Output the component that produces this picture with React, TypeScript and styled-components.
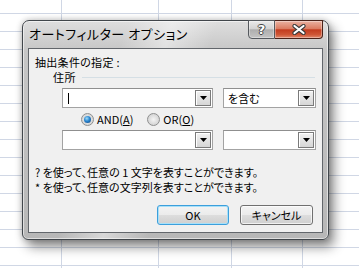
import React from "react";
import styled, { createGlobalStyle } from "styled-components";

const GRID = "#d0d7e5";
const FONT = `"Noto Sans CJK JP", "Noto Sans", sans-serif`;

const GlobalStyle = createGlobalStyle`
  html, body { margin: 0; padding: 0; background: #fff; }
  body { width: 359px; height: 268px; overflow: hidden; font-family: ${FONT}; }
`;

const Sheet = styled.div`
  width: 359px;
  height: 268px;
  box-sizing: border-box;
  padding: 20px 0 0 22px;
  background-color: #fff;
  background-image:
    linear-gradient(${GRID}, ${GRID}),
    linear-gradient(${GRID}, ${GRID}),
    linear-gradient(${GRID}, ${GRID}),
    linear-gradient(${GRID}, ${GRID}),
    linear-gradient(to bottom, ${GRID} 0 1px, transparent 1px);
  background-size: 1px 100%, 1px 100%, 1px 100%, 1px 100%, 100% 18px;
  background-position: 61px 0, 158px 0, 231px 0, 302px 0, 0 13px;
  background-repeat: no-repeat, no-repeat, no-repeat, no-repeat, repeat;
`;

const Window = styled.div`
  width: 307px;
  height: 220px;
  box-sizing: border-box;
  display: flex;
  flex-direction: column;
  padding: 0 5px 6px 5px;
  border: 1px solid #41464b;
  border-radius: 7px 7px 6px 6px;
  background:
    linear-gradient(108deg, rgba(255,255,255,0) 28%, rgba(255,255,255,.45) 40%, rgba(255,255,255,0) 52%),
    linear-gradient(to bottom, #dedede 0, #c6c6c6 30px, #b7b7b7 100%);
  box-shadow:
    inset 0 0 0 1px rgba(255,255,255,.55),
    5px 7px 12px rgba(0,0,0,.45),
    0 0 6px rgba(0,0,0,.25);
`;

const TitleBar = styled.div`
  height: 27px;
  display: flex;
  justify-content: space-between;
  align-items: flex-start;
  flex: none;
`;

const Title = styled.div`
  font-size: 13px;
  line-height: 16px;
  padding: 5px 0 0 1px;
  color: #000;
  white-space: nowrap;
  font-feature-settings: "palt";
  letter-spacing: 0.5px;
`;

const CaptionButtons = styled.div`
  display: flex;
  margin-top: -1px;
`;

const CaptionButton = styled.div<{ $kind: "help" | "close" }>`
  height: 19px;
  box-sizing: border-box;
  width: ${(p) => (p.$kind === "help" ? "27px" : "48px")};
  display: flex;
  align-items: center;
  justify-content: center;
  border: 1px solid ${(p) => (p.$kind === "help" ? "#55595e" : "#4a2219")};
  border-left-width: ${(p) => (p.$kind === "help" ? "1px" : "0")};
  border-radius: ${(p) => (p.$kind === "help" ? "0 0 0 4px" : "0 0 4px 0")};
  background: ${(p) =>
    p.$kind === "help"
      ? "linear-gradient(to bottom, #eaeaea 0%, #d3d3d3 45%, #aeaeae 52%, #c4c4c4 100%)"
      : "linear-gradient(to bottom, #eab2a2 0%, #db7c62 45%, #c33c1f 52%, #cf5636 80%, #e08a6e 100%)"};
  box-shadow: inset 0 0 0 1px rgba(255,255,255,.35);
`;

const HelpGlyph = styled.span`
  font-family: "DejaVu Sans", sans-serif;
  font-weight: bold;
  font-size: 13px;
  line-height: 13px;
  color: #fff;
  text-shadow: 1px 0 0 #444, -1px 0 0 #444, 0 1px 0 #444, 0 -1px 0 #444;
`;

const Client = styled.div`
  flex: 1;
  display: flex;
  flex-direction: column;
  border: 1px solid #62666b;
  background: #f0f0f0;
  font-size: 11px;
  line-height: 14px;
  color: #000;
  font-feature-settings: "palt";
`;

const Heading = styled.div`
  padding: 6px 0 0 6px;
  letter-spacing: 0.3px;
`;

const GroupRow = styled.div`
  display: flex;
  align-items: center;
  gap: 6px;
  margin: 1px 7px 0 24px;
  letter-spacing: 0.5px;
`;

const GroupLine = styled.div`
  flex: 1;
  height: 1px;
  background: #d5dfe5;
`;

const ComboRow = styled.div<{ $top: number }>`
  display: flex;
  gap: 10px;
  padding-left: 33px;
  margin-top: ${(p) => p.$top}px;
`;

const Combo = styled.div<{ $w: number }>`
  width: ${(p) => p.$w}px;
  height: 20px;
  box-sizing: border-box;
  border: 1px solid #a3a3a3;
  border-top-color: #8f8f8f;
  background: #fff;
  display: flex;
  align-items: center;
  padding: 1px;
`;

const ComboText = styled.div`
  flex: 1;
  padding-left: 3px;
  white-space: nowrap;
  display: flex;
  align-items: center;
`;

const Caret = styled.span`
  display: inline-block;
  width: 1px;
  height: 11px;
  margin-left: 1px;
  background: #000;
`;

const DropButton = styled.div`
  width: 16px;
  height: 16px;
  box-sizing: border-box;
  border: 1px solid #7a7a7a;
  background: linear-gradient(to bottom, #f2f2f2, #d6d6d6);
  box-shadow: inset 1px 1px 0 #fff;
  display: flex;
  align-items: center;
  justify-content: center;
`;

const RadioRow = styled.div`
  height: 22px;
  display: flex;
  align-items: center;
  padding-left: 52px;
`;

const RadioItem = styled.label`
  display: flex;
  align-items: center;
  gap: 3px;
  margin-right: 14px;
`;

const RadioCircle = styled.span<{ $checked?: boolean }>`
  width: 13px;
  height: 13px;
  box-sizing: border-box;
  border-radius: 50%;
  border: 1px solid #8e8f8f;
  background: radial-gradient(circle at 50% 50%, #f4f4f4 0%, #d6d6d6 70%, #eaeaea 100%);
  display: flex;
  align-items: center;
  justify-content: center;
  &::after {
    content: "";
    display: ${(p) => (p.$checked ? "block" : "none")};
    width: 7px;
    height: 7px;
    border-radius: 50%;
    background: radial-gradient(circle at 40% 35%, #9fdcf8 0%, #2a86d0 45%, #0d3f7a 100%);
  }
`;

const Footer = styled.div`
  margin-top: 15px;
  padding-left: 6px;
  line-height: 15px;
  white-space: nowrap;
`;

const ButtonRow = styled.div`
  display: flex;
  justify-content: flex-end;
  gap: 11px;
  padding-right: 9px;
  margin-top: 10px;
`;

const PushButton = styled.div<{ $default?: boolean; $w: number }>`
  width: ${(p) => p.$w}px;
  height: 20px;
  box-sizing: border-box;
  border: 1px solid ${(p) => (p.$default ? "#3c9fdc" : "#707070")};
  border-radius: 3px;
  background: linear-gradient(to bottom, #f3f3f3 0%, #ebebeb 50%, #dddddd 51%, #cfcfcf 100%);
  box-shadow: ${(p) =>
    p.$default ? "inset 0 0 0 1px #a8e0f8" : "inset 0 0 0 1px rgba(255,255,255,.7)"};
  display: flex;
  align-items: center;
  justify-content: center;
  font-size: 11px;
`;

const Arrow = () => (
  <svg width="7" height="4" viewBox="0 0 7 4">
    <path d="M0 0 H7 L3.5 4 Z" fill="#000" />
  </svg>
);

const CloseGlyph = () => (
  <svg width="14" height="11" viewBox="0 0 14 11">
    <path d="M2.5 2 L11.5 9 M11.5 2 L2.5 9" stroke="#3b3b3b" strokeWidth="4.2" strokeLinecap="round" />
    <path d="M2.5 2 L11.5 9 M11.5 2 L2.5 9" stroke="#fff" strokeWidth="2.2" strokeLinecap="round" />
  </svg>
);

export default function App() {
  return (
    <>
      <GlobalStyle />
      <Sheet>
        <Window>
          <TitleBar>
            <Title>オートフィルター オプション</Title>
            <CaptionButtons>
              <CaptionButton $kind="help">
                <HelpGlyph>?</HelpGlyph>
              </CaptionButton>
              <CaptionButton $kind="close">
                <CloseGlyph />
              </CaptionButton>
            </CaptionButtons>
          </TitleBar>
          <Client>
            <Heading>抽出条件の指定 :</Heading>
            <GroupRow>
              <span>住所</span>
              <GroupLine />
            </GroupRow>
            <ComboRow $top={4}>
              <Combo $w={151}>
                <ComboText>
                  <Caret />
                </ComboText>
                <DropButton>
                  <Arrow />
                </DropButton>
              </Combo>
              <Combo $w={93}>
                <ComboText>を含む</ComboText>
                <DropButton>
                  <Arrow />
                </DropButton>
              </Combo>
            </ComboRow>
            <RadioRow>
              <RadioItem>
                <RadioCircle $checked />
                <span>
                  AND(<u>A</u>)
                </span>
              </RadioItem>
              <RadioItem>
                <RadioCircle />
                <span>
                  OR(<u>O</u>)
                </span>
              </RadioItem>
            </RadioRow>
            <ComboRow $top={0}>
              <Combo $w={151}>
                <ComboText />
                <DropButton>
                  <Arrow />
                </DropButton>
              </Combo>
              <Combo $w={93}>
                <ComboText />
                <DropButton>
                  <Arrow />
                </DropButton>
              </Combo>
            </ComboRow>
            <Footer>
              ? を使って、任意の 1 文字を表すことができます。
              <br />* を使って、任意の文字列を表すことができます。
            </Footer>
            <ButtonRow>
              <PushButton $default $w={72}>
                OK
              </PushButton>
              <PushButton $w={73}>キャンセル</PushButton>
            </ButtonRow>
          </Client>
        </Window>
      </Sheet>
    </>
  );
}
